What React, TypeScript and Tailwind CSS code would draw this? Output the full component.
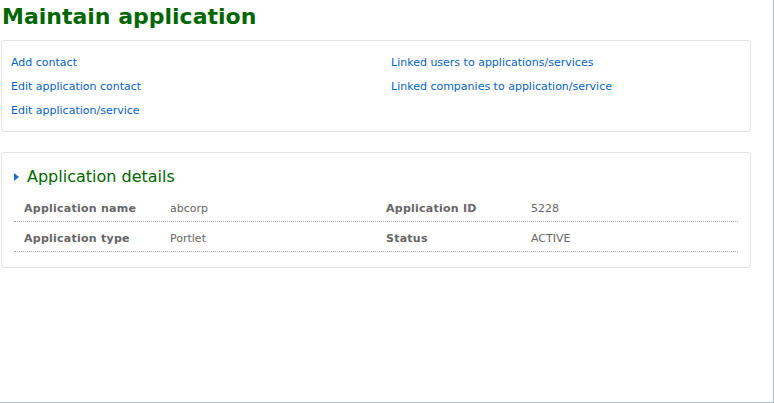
const links = [
  ['Add contact', 'Linked users to applications/services'],
  ['Edit application contact', 'Linked companies to application/service'],
  ['Edit application/service', ''],
];

const details = [
  ['Application name', 'abcorp', 'Application ID', '5228'],
  ['Application type', 'Portlet', 'Status', 'ACTIVE'],
];

export default function App() {
  return (
    <div
      className="w-[774px] h-[403px] bg-white border-r border-b border-[#a9bfd0] overflow-hidden"
      style={{ fontFamily: '"DejaVu Sans", Verdana, sans-serif' }}
    >
      <div className="h-[40px] pt-[4px] pl-[2px]">
        <h1 className="text-[22px] leading-[26px] font-bold text-[#006600]">Maintain application</h1>
      </div>

      <div className="ml-[1px] w-[750px] h-[92px] border border-[#e3e3e3] rounded-[3px] pt-[10px] pl-[9px]">
        {links.map(([a, b]) => (
          <div key={a} className="flex h-[24px] items-center text-[11px] text-[#0563c1]">
            <a className="w-[380px] cursor-pointer">{a}</a>
            <a className="cursor-pointer">{b}</a>
          </div>
        ))}
      </div>

      <div className="ml-[1px] mt-[20px] w-[750px] h-[116px] border border-[#e3e3e3] rounded-[3px] pl-[12px]">
        <div className="h-[39px] pt-[9px] flex items-center gap-[8px]">
          <svg width="5" height="8" viewBox="0 0 5 8">
            <path d="M0 0 L5 4 L0 8 Z" fill="#1a6fcc" />
          </svg>
          <h2 className="text-[16px] leading-[20px] text-[#006600]">Application details</h2>
        </div>
        <div className="w-[724px] text-[11px] text-[#666]">
          {details.map(([l1, v1, l2, v2]) => (
            <div
              key={l1}
              className="flex h-[30px] items-center pt-[6px] border-b border-dotted border-[#a8a8a8]"
            >
              <span className="w-[156px] pl-[10px] font-bold tracking-[0.25px]">{l1}</span>
              <span className="w-[216px]">{v1}</span>
              <span className="w-[145px] font-bold tracking-[0.25px]">{l2}</span>
              <span>{v2}</span>
            </div>
          ))}
        </div>
      </div>
    </div>
  );
}
